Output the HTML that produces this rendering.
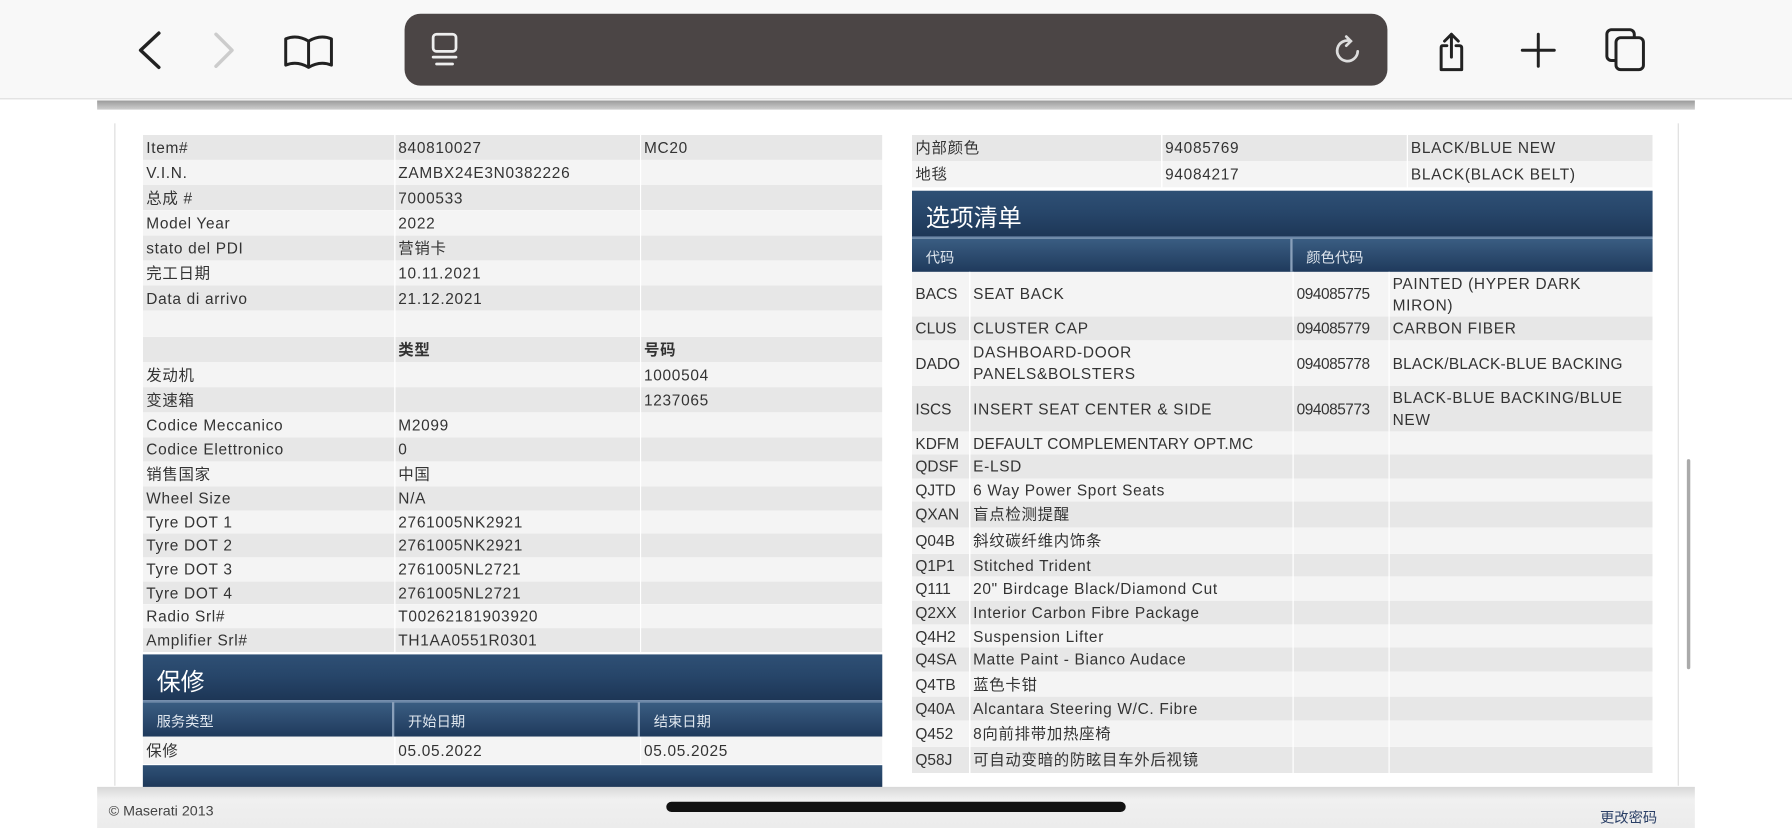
<!DOCTYPE html>
<html><head><meta charset="utf-8"><style>
*{margin:0;padding:0;box-sizing:border-box}
html,body{width:1792px;height:828px;overflow:hidden;background:#fff}
#s{position:absolute;left:0;top:0;width:1568px;height:725px;transform:scale(1.142857,1.142069);transform-origin:0 0;font-family:"Liberation Sans","Noto Sans CJK SC",sans-serif;color:#333;font-size:13.5px}
.a{position:absolute}
table{border-collapse:collapse;table-layout:fixed;position:absolute}
td{padding:0 3px;border-right:1px solid #fff;white-space:nowrap;overflow:hidden;vertical-align:middle;line-height:19px;letter-spacing:0.6px}
tr:nth-child(odd) td{background:#e7e7e7}
tr:nth-child(even) td{background:#f4f4f4}
.hd{background:linear-gradient(180deg,#2f5075 0%,#27466a 45%,#1d3656 100%);color:#fff;font-size:21px;padding:8px 12px;position:absolute}
.sh{position:absolute;background:linear-gradient(#3a5d82,#1f3a5c);color:#dfe6ee;font-size:12.5px;display:flex;border-top:2px solid #6d88a8}
.sh div{border-right:2px solid #8aa0ba;padding:6px 12px}
</style></head><body><div id="s">
<div class="a" style="left:0;top:0;width:1568px;height:87px;background:#f8f8f8;border-bottom:1px solid #ddd"></div>
<svg class="a" style="left:110px;top:22px" width="200" height="44" fill="none" stroke="#222" stroke-width="3" stroke-linecap="round" stroke-linejoin="round">
<path d="M29 7 L13 22 L29 37"/><path d="M79 8 L93 22 L79 36" stroke="#ccc"/>
<path d="M140 12 Q150 8 160 14 Q170 8 180 12 V35 Q170 31 160 37 Q150 31 140 35 Z M160 14 V37" stroke-width="2.6"/></svg>
<div class="a" style="left:354px;top:12px;width:860px;height:63px;background:#4b4545;border-radius:14px"></div>
<svg class="a" style="left:370px;top:24px" width="40" height="40" fill="none" stroke="#eee" stroke-width="2.4" stroke-linecap="round"><rect x="9" y="6" width="20" height="15" rx="3"/><path d="M9 26H29M12 32H26"/></svg>
<svg class="a" style="left:1160px;top:26px" width="40" height="40" fill="none" stroke="#ddd" stroke-width="2.4" stroke-linecap="round"><path d="M28 19 A9 9 0 1 1 22 10 M18 6 L22 10 L18 14"/></svg>
<svg class="a" style="left:1240px;top:18px" width="230" height="50" fill="none" stroke="#222" stroke-width="2.6" stroke-linecap="round" stroke-linejoin="round">
<path d="M30 12 V32 M24 18 L30 12 L36 18 M26 22 H22 Q21 22 21 24 V43 H39 V24 Q39 22 37 22 H34"/>
<path d="M106 12 V40 M92 26 H120"/>
<rect x="166" y="8" width="24" height="27" rx="4"/><rect x="174" y="15" width="24" height="28" rx="4" fill="#f8f8f8"/></svg>
<div class="a" style="left:85px;top:88px;width:1398px;height:8px;background:linear-gradient(#9a9a9a,#cfcfcf)"></div>
<div class="a" style="left:100px;top:108px;width:1px;height:580px;background:#ddd"></div>
<div class="a" style="left:1468px;top:108px;width:1px;height:580px;background:#ddd"></div>
<div class="a" style="left:1476px;top:402px;width:3px;height:184px;background:#aaa;border-radius:2px"></div>

<table style="left:125px;top:118px;width:647px">
<colgroup><col style="width:220px"><col style="width:215px"><col style="width:212px"></colgroup>
<tr style="height:22px"><td>Item#</td><td>840810027</td><td>MC20</td></tr>
<tr style="height:22px"><td>V.I.N.</td><td>ZAMBX24E3N0382226</td><td></td></tr>
<tr style="height:22px"><td>总成 #</td><td>7000533</td><td></td></tr>
<tr style="height:22px"><td>Model Year</td><td>2022</td><td></td></tr>
<tr style="height:22px"><td>stato del PDI</td><td>营销卡</td><td></td></tr>
<tr style="height:22px"><td>完工日期</td><td>10.11.2021</td><td></td></tr>
<tr style="height:22px"><td>Data di arrivo</td><td>21.12.2021</td><td></td></tr>
<tr style="height:23px"><td></td><td></td><td></td></tr>
<tr style="height:22px"><td></td><td><b>类型</b></td><td><b>号码</b></td></tr>
<tr style="height:22px"><td>发动机</td><td></td><td>1000504</td></tr>
<tr style="height:22px"><td>变速箱</td><td></td><td>1237065</td></tr>
<tr style="height:22px"><td>Codice Meccanico</td><td>M2099</td><td></td></tr>
<tr style="height:21px"><td>Codice Elettronico</td><td>0</td><td></td></tr>
<tr style="height:22px"><td>销售国家</td><td>中国</td><td></td></tr>
<tr style="height:21px"><td>Wheel Size</td><td>N/A</td><td></td></tr>
<tr style="height:20px"><td>Tyre DOT 1</td><td>2761005NK2921</td><td></td></tr>
<tr style="height:21px"><td>Tyre DOT 2</td><td>2761005NK2921</td><td></td></tr>
<tr style="height:21px"><td>Tyre DOT 3</td><td>2761005NL2721</td><td></td></tr>
<tr style="height:20px"><td>Tyre DOT 4</td><td>2761005NL2721</td><td></td></tr>
<tr style="height:21px"><td>Radio Srl#</td><td>T00262181903920</td><td></td></tr>
<tr style="height:21px"><td>Amplifier Srl#</td><td>TH1AA0551R0301</td><td></td></tr>
</table>
<div class="hd" style="left:125px;top:573px;width:647px;height:40px">保修</div>
<div class="sh" style="left:125px;top:613px;width:647px;height:32px"><div style="width:220px">服务类型</div><div style="width:215px">开始日期</div><div style="width:212px;border:0">结束日期</div></div>
<table style="left:125px;top:645px;width:647px"><colgroup><col style="width:220px"><col style="width:215px"><col style="width:212px"></colgroup>
<tr style="height:24px"><td style="background:#f4f4f4">保修</td><td style="background:#f4f4f4">05.05.2022</td><td style="background:#f4f4f4">05.05.2025</td></tr></table>
<div class="hd" style="left:125px;top:670px;width:647px;height:20px"></div>

<table style="left:798px;top:118px;width:648px">
<colgroup><col style="width:218px"><col style="width:215px"><col style="width:215px"></colgroup>
<tr style="height:23px"><td>内部颜色</td><td>94085769</td><td>BLACK/BLUE NEW</td></tr>
<tr style="height:23px"><td>地毯</td><td>94084217</td><td>BLACK(BLACK BELT)</td></tr></table>
<div class="hd" style="left:798px;top:167px;width:648px;height:41px">选项清单</div>
<div class="sh" style="left:798px;top:207px;width:648px;height:31px"><div style="width:333px">代码</div><div style="border:0">颜色代码</div></div>
<table style="left:798px;top:238px;width:648px">
<colgroup><col style="width:50px"><col style="width:283px"><col style="width:84px"><col style="width:231px"></colgroup>
<tr style="height:39px"><td style="background:#f4f4f4;letter-spacing:0">BACS</td><td style="background:#f4f4f4">SEAT BACK</td><td style="background:#f4f4f4;letter-spacing:-0.4px">094085775</td><td style="background:#f4f4f4">PAINTED (HYPER DARK<br>MIRON)</td></tr>
<tr style="height:21px"><td style="background:#e7e7e7;letter-spacing:0">CLUS</td><td style="background:#e7e7e7">CLUSTER CAP</td><td style="background:#e7e7e7;letter-spacing:-0.4px">094085779</td><td style="background:#e7e7e7">CARBON FIBER</td></tr>
<tr style="height:40px"><td style="background:#f4f4f4;letter-spacing:0">DADO</td><td style="background:#f4f4f4">DASHBOARD-DOOR<br>PANELS&amp;BOLSTERS</td><td style="background:#f4f4f4;letter-spacing:-0.4px">094085778</td><td style="background:#f4f4f4;letter-spacing:0.2px">BLACK/BLACK-BLUE BACKING</td></tr>
<tr style="height:40px"><td style="background:#e7e7e7;letter-spacing:0">ISCS</td><td style="background:#e7e7e7">INSERT SEAT CENTER &amp; SIDE</td><td style="background:#e7e7e7;letter-spacing:-0.4px">094085773</td><td style="background:#e7e7e7">BLACK-BLUE BACKING/BLUE<br>NEW</td></tr>
</table>
<table style="left:798px;top:378px;width:648px">
<colgroup><col style="width:50px"><col style="width:283px"><col style="width:84px"><col style="width:231px"></colgroup>
<tr style="height:20px"><td style="background:#f4f4f4;letter-spacing:0">KDFM</td><td style="background:#f4f4f4;letter-spacing:0.2px">DEFAULT COMPLEMENTARY OPT.MC</td><td style="background:#f4f4f4"></td><td style="background:#f4f4f4"></td></tr>
<tr style="height:21px"><td style="background:#e7e7e7;letter-spacing:0">QDSF</td><td style="background:#e7e7e7">E-LSD</td><td style="background:#e7e7e7"></td><td style="background:#e7e7e7"></td></tr>
<tr style="height:20px"><td style="background:#f4f4f4;letter-spacing:0">QJTD</td><td style="background:#f4f4f4">6 Way Power Sport Seats</td><td style="background:#f4f4f4"></td><td style="background:#f4f4f4"></td></tr>
<tr style="height:23px"><td style="background:#e7e7e7;letter-spacing:0">QXAN</td><td style="background:#e7e7e7">盲点检测提醒</td><td style="background:#e7e7e7"></td><td style="background:#e7e7e7"></td></tr>
<tr style="height:23px"><td style="background:#f4f4f4;letter-spacing:0">Q04B</td><td style="background:#f4f4f4">斜纹碳纤维内饰条</td><td style="background:#f4f4f4"></td><td style="background:#f4f4f4"></td></tr>
<tr style="height:20px"><td style="background:#e7e7e7;letter-spacing:0">Q1P1</td><td style="background:#e7e7e7">Stitched Trident</td><td style="background:#e7e7e7"></td><td style="background:#e7e7e7"></td></tr>
<tr style="height:21px"><td style="background:#f4f4f4;letter-spacing:0">Q111</td><td style="background:#f4f4f4">20" Birdcage Black/Diamond Cut</td><td style="background:#f4f4f4"></td><td style="background:#f4f4f4"></td></tr>
<tr style="height:21px"><td style="background:#e7e7e7;letter-spacing:0">Q2XX</td><td style="background:#e7e7e7">Interior Carbon Fibre Package</td><td style="background:#e7e7e7"></td><td style="background:#e7e7e7"></td></tr>
<tr style="height:20px"><td style="background:#f4f4f4;letter-spacing:0">Q4H2</td><td style="background:#f4f4f4">Suspension Lifter</td><td style="background:#f4f4f4"></td><td style="background:#f4f4f4"></td></tr>
<tr style="height:21px"><td style="background:#e7e7e7;letter-spacing:0">Q4SA</td><td style="background:#e7e7e7">Matte Paint - Bianco Audace</td><td style="background:#e7e7e7"></td><td style="background:#e7e7e7"></td></tr>
<tr style="height:22px"><td style="background:#f4f4f4;letter-spacing:0">Q4TB</td><td style="background:#f4f4f4">蓝色卡钳</td><td style="background:#f4f4f4"></td><td style="background:#f4f4f4"></td></tr>
<tr style="height:21px"><td style="background:#e7e7e7;letter-spacing:0">Q40A</td><td style="background:#e7e7e7">Alcantara Steering W/C. Fibre</td><td style="background:#e7e7e7"></td><td style="background:#e7e7e7"></td></tr>
<tr style="height:23px"><td style="background:#f4f4f4;letter-spacing:0">Q452</td><td style="background:#f4f4f4">8向前排带加热座椅</td><td style="background:#f4f4f4"></td><td style="background:#f4f4f4"></td></tr>
<tr style="height:23px"><td style="background:#e7e7e7;letter-spacing:0">Q58J</td><td style="background:#e7e7e7">可自动变暗的防眩目车外后视镜</td><td style="background:#e7e7e7"></td><td style="background:#e7e7e7"></td></tr>
</table>

<div class="a" style="left:85px;top:689px;width:1398px;height:36px;background:linear-gradient(#d8d8d8,#f0f0f0 30%,#ececec)"></div>
<div class="a" style="left:95px;top:703px;font-size:12.5px;color:#444">© Maserati 2013</div>
<div class="a" style="left:1400px;top:705px;font-size:12.5px;color:#2a3f66">更改密码</div>
<div class="a" style="left:583px;top:702px;width:402px;height:9px;background:#111;border-radius:5px"></div>
</div></body></html>
